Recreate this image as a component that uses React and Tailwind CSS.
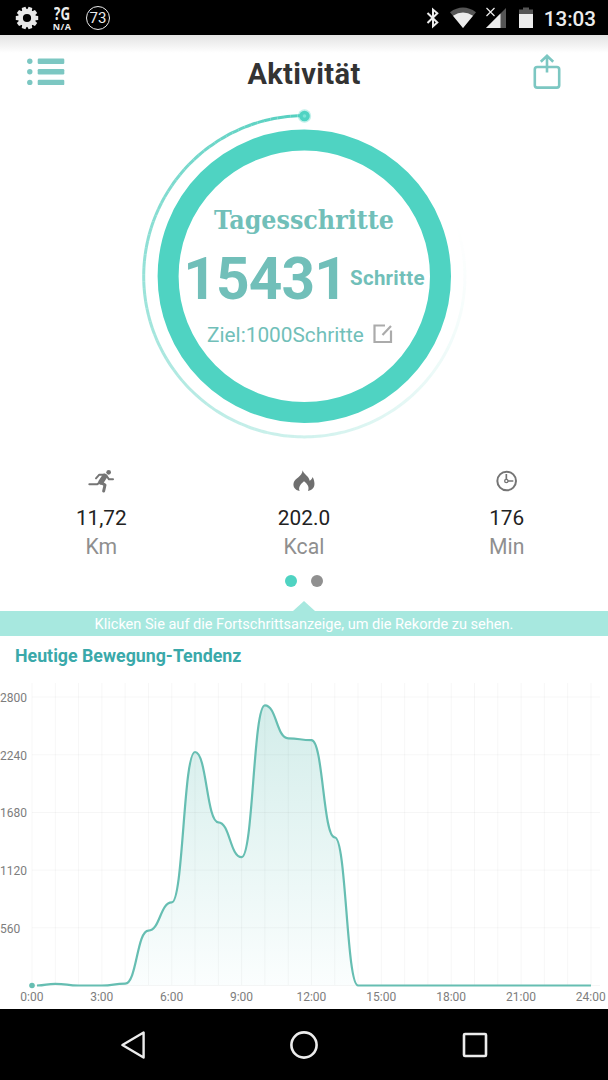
const X0 = 32;
const STEP = 23.29;
const BASE = 302.5;
const samples = [302.5, 300.8, 302.5, 302.5, 300.6, 247.6, 219.4, 69, 139.3, 174.2, 22.3, 55.3, 57.2, 154.4, 302.5, 302.5, 302.5, 302.5, 302.5, 302.5, 302.5, 302.5, 302.5, 302.5, 302.5];
const px = (i) => X0 + i * STEP;

function curve(start) {
  let d = `M${start} ${BASE}`;
  for (let i = 1; i < samples.length; i++) {
    const prev = i === 1 ? start : px(i - 1);
    const mid = (prev + px(i)) / 2;
    d += ` C${mid} ${samples[i - 1]} ${mid} ${samples[i]} ${px(i)} ${samples[i]}`;
  }
  return d;
}

function Chart() {
  const rows = [14, 71.8, 129.5, 187.1, 244.8, 302.5];
  return (
    <svg width="608" height="308" viewBox="0 0 608 308" className="block">
      <defs>
        <linearGradient id="area" x1="0" y1="22" x2="0" y2="303" gradientUnits="userSpaceOnUse">
          <stop offset="0" stopColor="#d3edea" />
          <stop offset="1" stopColor="#fbfefe" />
        </linearGradient>
      </defs>
      <path d={`${curve(37)} Z`} fill="url(#area)" />
      {samples.map((_, i) => (
        <line key={i} x1={px(i)} x2={px(i)} y1="0" y2="302" stroke="#000" strokeOpacity="0.035" />
      ))}
      {rows.map((y) => (
        <line key={y} x1="32" x2="600" y1={y} y2={y} stroke="#000" strokeOpacity="0.035" />
      ))}
      <path d={curve(37)} fill="none" stroke="#66beb2" strokeWidth="2.2" />
      <circle cx="32" cy={BASE} r="2.8" fill="#66beb2" />
    </svg>
  );
}

function Dial() {
  const n = 120;
  const sweep = 290;
  const at = (deg) => {
    const a = (deg * Math.PI) / 180;
    return `${304.3 - 160.6 * Math.sin(a)} ${170.3 - 160.6 * Math.cos(a)}`;
  };
  return (
    <svg width="608" height="340" viewBox="0 0 608 340" className="col-start-1 row-start-1 block">
      {Array.from({ length: n }, (_, i) => {
        const t = i / n;
        return (
          <path
            key={i}
            d={`M${at(t * sweep)} A160.6 160.6 0 0 0 ${at(((i + 1) / n) * sweep)}`}
            fill="none"
            stroke="#54cfbf"
            strokeWidth="3"
            strokeOpacity={Math.pow(1 - t, 1.35)}
          />
        );
      })}
      <circle cx="304.3" cy="170.3" r="136.2" fill="none" stroke="#4fd3c2" strokeWidth="21" />
      <circle cx="304.5" cy="10" r="6.7" fill="#4fd3c2" fillOpacity="0.35" />
      <circle cx="304.5" cy="10" r="5.3" fill="#4fd3c2" />
      <circle cx="304.5" cy="10" r="1.8" fill="#7be3d6" />
    </svg>
  );
}

function Gear() {
  return (
    <svg width="24" height="24" viewBox="-12 -12 24 24">
      {Array.from({ length: 10 }, (_, i) => (
        <path key={i} d="M-2.6 -7 L-1.9 -11.2 H1.9 L2.6 -7 Z" fill="#e9e9e9" transform={`rotate(${i * 36 + 18})`} />
      ))}
      <circle r="6.5" fill="none" stroke="#e9e9e9" strokeWidth="4.8" />
    </svg>
  );
}

function StatusBar() {
  return (
    <header className="flex h-[35px] items-center bg-black pl-[15px] pr-3 pt-px font-medium text-[#ececec]">
      <Gear />
      <div className="ml-3 flex w-[22px] flex-col items-center">
        <span className="h-[17px] scale-x-[.72] font-['Open_Sans',sans-serif] text-[18.5px] leading-[16px] font-bold whitespace-nowrap">?G</span>
        <span className="h-[9px] font-['Open_Sans',sans-serif] text-[9px] leading-[9px] font-bold tracking-[.5px] whitespace-nowrap">N/A</span>
      </div>
      <div className="ml-[13px] flex size-6 items-center justify-center rounded-full border-[1.5px] border-[#ececec] text-[15px] font-normal">73</div>
      <div className="ml-auto flex items-center">
        <svg width="14" height="22" viewBox="0 0 14 22" fill="none" stroke="#ececec" strokeWidth="2">
          <path d="M1.5 6 L11.3 15.5 L7 19.2 V2.6 L11.3 6.3 L1.5 16" />
        </svg>
        <svg width="26" height="22" viewBox="0 0 26 22" className="ml-[10px]">
          <path d="M0 5.2 Q13 -4 26 5.2 L13 21 Z" fill="#555" />
          <path d="M3 8.8 Q13 2 23 8.8 L13 21 Z" fill="#ececec" />
        </svg>
        <svg width="22" height="22" viewBox="0 0 22 22" className="ml-[9px]">
          <path d="M21 1 V21 H1 Z" fill="#555" />
          <path d="M15.5 6.5 V21 H1 Z" fill="#ececec" />
          <path d="M0 0 H12 L0 11 Z" fill="#000" />
          <path d="M1.5 1 L9.5 9 M9.5 1 L1.5 9" stroke="#ececec" strokeWidth="1.2" />
        </svg>
        <svg width="14" height="22" viewBox="0 0 14 22" className="ml-3">
          <path d="M0 8 V2.5 H4 V.5 H10 V2.5 H14 V8 Z" fill="#555" />
          <path d="M0 7 H14 V21 H0 Z" fill="#ececec" />
        </svg>
        <span className="ml-[11px] pt-px text-[20.6px] leading-6">13:03</span>
      </div>
    </header>
  );
}

function Toolbar() {
  return (
    <div className="flex h-[71px] items-start justify-between bg-linear-to-b from-[#e3e3e3] to-white to-[18px] pl-[27px] pr-[47px] pt-[18px]">
      <svg width="38" height="38" viewBox="0 0 38 38" fill="#7cc7c2">
        {[8.3, 18.8, 29.4].map((y) => (
          <g key={y}>
            <circle cx="2.8" cy={y} r="2.7" />
            <rect x="10.7" y={y - 2.7} width="26.6" height="5.4" rx="1.2" />
          </g>
        ))}
      </svg>
      <h1 className="-mr-[10px] pt-[3px] text-[29px] leading-[36px] font-bold tracking-[.35px] text-[#333]">Aktivität</h1>
      <svg width="28" height="38" viewBox="0 0 28 38" fill="none" stroke="#7cc7c2" strokeWidth="2.6">
        <rect x="1.8" y="14" width="24.4" height="20.6" rx="2.4" />
        <path d="M14 19.5 V3 M7.8 8.8 L14 2.8 L20.2 8.8" />
      </svg>
    </div>
  );
}

function RunIcon() {
  return (
    <svg width="28" height="24" viewBox="80 40 84 72" fill="none" stroke="#757575" strokeWidth="6" strokeLinecap="round" strokeLinejoin="round">
      <circle cx="145" cy="50" r="7" fill="#757575" stroke="none" />
      <path d="M132 57 H117 L107 68 M139 61 L146 71 H158 M119 80 L110 86 H87" />
      <path d="M133 62 L122 79" strokeWidth="16" />
      <path d="M123 81 L134 88 L130 106" strokeWidth="9" />
    </svg>
  );
}

function FlameIcon() {
  return (
    <svg width="24" height="24" viewBox="695 42 72 72" fill="#6f6f6f">
      <path d="M727 46 C730 58 745 63 748 77 C753 75 756 70 757 66 C763 78 765 92 758 100 C754 105 750 107 743 108 C748 96 741 87 731 79 C720 88 713 98 718 108 C704 105 697 95 700 83 C703 71 726 64 727 46 Z" />
    </svg>
  );
}

function ClockIcon() {
  return (
    <svg width="24" height="24" viewBox="1303 41 72 72" fill="none" stroke="#757575" strokeWidth="6">
      <circle cx="1338" cy="77" r="28" />
      <circle cx="1337" cy="77" r="5" strokeWidth="4" />
      <path d="M1337 56 V72 M1342 77 H1358" strokeWidth="5" />
    </svg>
  );
}

function Metric({ icon, value, unit }) {
  return (
    <div className="flex flex-col items-center">
      {icon}
      <span className="mt-3 text-[20.8px] leading-[27px] text-[#222]">{value}</span>
      <span className="text-[21.2px] leading-[30px] text-[#8f8f8f]">{unit}</span>
    </div>
  );
}

export default function App() {
  const labels = ["2800", "2240", "1680", "1120", "560"];
  const hours = ["0:00", "3:00", "6:00", "9:00", "12:00", "15:00", "18:00", "21:00", "24:00"];
  return (
    <div className="flex h-[1080px] w-[608px] flex-col overflow-hidden bg-white font-[Roboto,sans-serif]">
      <StatusBar />
      <Toolbar />

      <section className="grid h-[340px] grid-cols-1">
        <Dial />
        <div className="col-start-1 row-start-1 flex flex-col items-center pt-[94px] text-[#71bfb9]">
          <h2 className="font-['DejaVu_Serif_Condensed','DejaVu_Serif',serif] text-[26.5px] leading-[39px] font-bold whitespace-nowrap">Tagesschritte</h2>
          <div className="mt-[5px] flex h-[68px] items-center font-bold">
            <span className="pt-[2px] text-[58.5px] leading-[68px] tracking-[-.8px]">15431</span>
            <span className="ml-[3px] text-[20.5px] leading-6 tracking-[.25px]">Schritte</span>
          </div>
          <div className="mt-[9px] mr-[8px] flex h-7 items-center gap-[9px]">
            <span className="text-[20.8px] leading-7">Ziel:1000Schritte</span>
            <svg width="20" height="20" viewBox="0 0 20 20" fill="none" stroke="#ababab" strokeWidth="2.2" className="mb-[3px]">
              <path d="M12 1.5 H1.5 V18 H18 V6.5 M9.5 11 L18 2" />
            </svg>
          </div>
        </div>
      </section>

      <section className="grid grid-cols-3 pt-[23px]">
        <Metric icon={<RunIcon />} value="11,72" unit="Km" />
        <Metric icon={<FlameIcon />} value="202.0" unit="Kcal" />
        <Metric icon={<ClockIcon />} value="176" unit="Min" />
      </section>

      <div className="mt-[13px] flex justify-center gap-[14px]">
        <span className="size-3 rounded-full bg-[#4fd3c2]" />
        <span className="size-3 rounded-full bg-[#909090]" />
      </div>

      <svg width="22" height="10" viewBox="0 0 22 10" className="mt-[14px] shrink-0 self-center fill-[#a7e8df]">
        <path d="M11 0 L22 10 H0 Z" />
      </svg>
      <p className="h-[25px] shrink-0 bg-[#a7e8df] text-center text-[14.55px] leading-[27px] text-white">
        Klicken Sie auf die Fortschrittsanzeige, um die Rekorde zu sehen.
      </p>

      <h2 className="h-[47px] shrink-0 pl-[15px] text-[17.8px] leading-[40px] font-bold text-[#3aa9aa]">Heutige Bewegung-Tendenz</h2>

      <section className="grid h-[326px] shrink-0 grid-cols-1 grid-rows-[308px_18px] text-xs text-[#7d7d7d]">
        <div className="col-start-1 row-start-1">
          <Chart />
        </div>
        <div className="col-start-1 row-start-1 flex flex-col pt-[6px]">
          {labels.map((l) => (
            <span key={l} className="h-[57.7px] leading-[18px]">{l}</span>
          ))}
        </div>
        <div className="-ml-[3px] flex w-[629px] leading-[13px]">
          {hours.map((h) => (
            <span key={h} className="w-[69.87px] shrink-0 text-center">{h}</span>
          ))}
        </div>
      </section>

      <nav className="flex h-[71px] shrink-0 items-center bg-black pl-[120px]">
        <svg width="26" height="30" viewBox="0 0 26 30" fill="none" stroke="#ececec" strokeWidth="2.4" strokeLinejoin="round">
          <path d="M23.6 2.5 V27.5 L2.4 15 Z" />
        </svg>
        <svg width="30" height="30" viewBox="0 0 30 30" fill="none" stroke="#ececec" strokeWidth="2.6" className="ml-[143px]">
          <circle cx="15" cy="15" r="12.6" />
        </svg>
        <svg width="26" height="26" viewBox="0 0 26 26" fill="none" stroke="#ececec" strokeWidth="2.6" className="ml-[143px]">
          <rect x="2" y="2" width="22" height="22" rx="1" />
        </svg>
      </nav>
    </div>
  );
}
